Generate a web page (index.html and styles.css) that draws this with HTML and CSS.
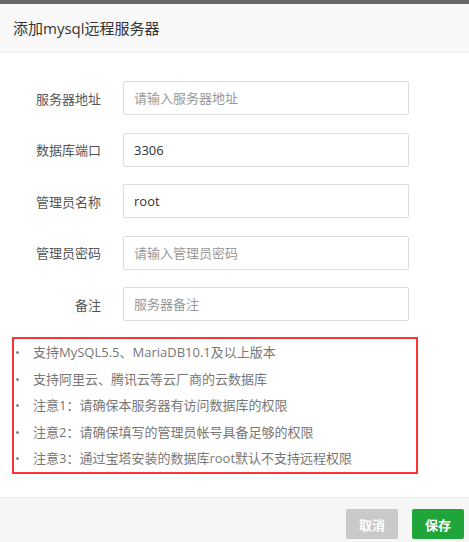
FILE: index.html
```html
<!DOCTYPE html>
<html lang="zh-CN">

<head>
    <meta charset="UTF-8">
    <meta name="viewport" content="width=device-width, initial-scale=1.0">
    <title>添加mysql远程服务器</title>
    <link rel="stylesheet" href="styles.css">
</head>

<body>
    <div class="layer">
        <div class="layer-title">添加mysql远程服务器</div>

        <div class="layer-content">
            <form class="form">
                <div class="line">
                    <span class="tname">服务器地址</span>
                    <input class="bt-input" type="text" placeholder="请输入服务器地址">
                </div>
                <div class="line">
                    <span class="tname">数据库端口</span>
                    <input class="bt-input" type="text" value="3306">
                </div>
                <div class="line">
                    <span class="tname">管理员名称</span>
                    <input class="bt-input" type="text" value="root">
                </div>
                <div class="line">
                    <span class="tname">管理员密码</span>
                    <input class="bt-input" type="text" placeholder="请输入管理员密码">
                </div>
                <div class="line">
                    <span class="tname">备注</span>
                    <input class="bt-input" type="text" placeholder="服务器备注">
                </div>
            </form>

            <ul class="help-info">
                <li>支持MySQL5.5、MariaDB10.1及以上版本</li>
                <li>支持阿里云、腾讯云等云厂商的云数据库</li>
                <li>注意1：请确保本服务器有访问数据库的权限</li>
                <li>注意2：请确保填写的管理员帐号具备足够的权限</li>
                <li>注意3：通过宝塔安装的数据库root默认不支持远程权限</li>
            </ul>
        </div>

        <div class="layer-btn">
            <button class="btn btn-cancel" type="button">取消</button>
            <button class="btn btn-save" type="button">保存</button>
        </div>
    </div>
</body>

</html>
```

FILE: styles.css
```css
body {
    margin: 0;
    background-color: #666;
    font-family: "Open Sans", "Noto Sans CJK SC", sans-serif;
    font-size: 13px;
    color: #333;
}

.layer {
    margin-top: 4px;
    background-color: #fff;
    height: 538px;
    overflow: hidden;
}

.layer-title {
    height: 48px;
    line-height: 48px;
    padding-left: 13px;
    font-size: 15px;
    color: #333;
    background-color: #f8f8f8;
    border-bottom: 1px solid #eee;
}

.layer-content {
    padding: 28px 0 0 12px;
    height: 416px;
}

.form {
    display: flex;
    flex-direction: column;
    gap: 17.5px;
}

.line {
    display: flex;
    align-items: center;
}

.tname {
    width: 89px;
    text-align: right;
    margin-right: 22px;
    color: #555;
}

.bt-input {
    box-sizing: border-box;
    width: 286px;
    height: 34px;
    padding: 0 10px;
    border: 1px solid #dcdce4;
    border-radius: 2px;
    font-family: inherit;
    font-size: 13px;
    color: #333;
    outline: none;
}

.bt-input::placeholder {
    color: #999;
}

.help-info {
    list-style: none;
    margin: 16px 0 0;
    padding: 0 0 0 19px;
    width: 406px;
    box-sizing: border-box;
    border: 2px solid #f33;
    color: #777;
}

.help-info li {
    position: relative;
    line-height: 26.5px;
}

.help-info li::before {
    content: "";
    position: absolute;
    left: -17px;
    top: 12px;
    width: 3px;
    height: 3px;
    border-radius: 50%;
    background-color: #888;
}

.layer-btn {
    display: flex;
    justify-content: flex-end;
    gap: 14px;
    padding: 11px 5px 0 0;
    height: 60px;
    background-color: #f6f6f6;
    border-top: 1px solid #eee;
}

.btn {
    width: 52px;
    height: 30px;
    border: none;
    border-radius: 2px;
    font-family: inherit;
    font-size: 13px;
    font-weight: bold;
    color: #fff;
}

.btn-cancel {
    background-color: #c9c9c9;
}

.btn-save {
    background-color: #20a53a;
}
```
